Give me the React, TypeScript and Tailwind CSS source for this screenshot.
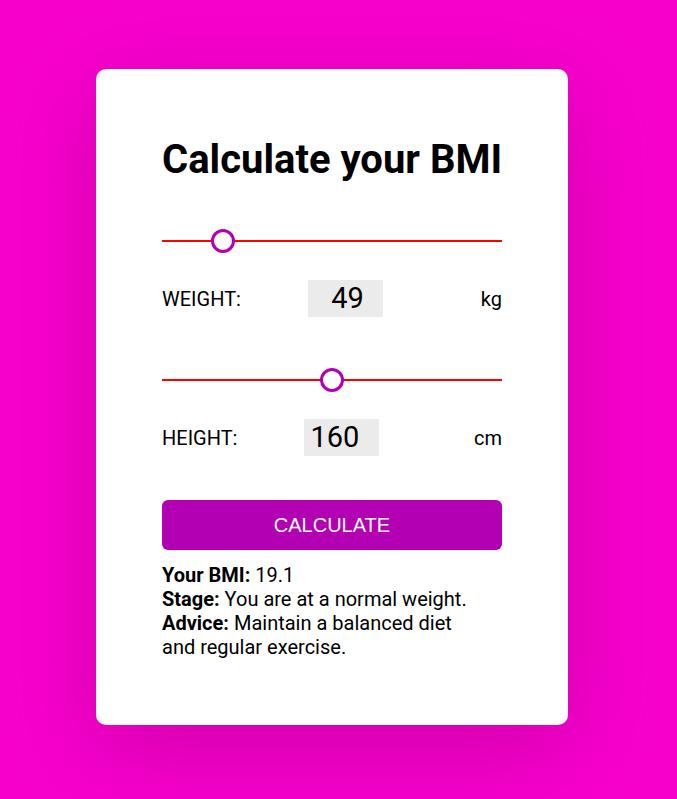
import { useState } from 'react';

function Slider({ percent }: { percent: number }) {
  return (
    <div className="relative h-6 w-full flex items-center">
      <div className="h-[2px] w-full bg-[#ff0000]" />
      <div
        className="absolute top-0 h-6 w-6 -translate-x-1/2 rounded-full border-[3px] border-[#b300b3] bg-white"
        style={{ left: `${percent}%` }}
      />
    </div>
  );
}

export default function App() {
  const [weight] = useState(49);
  const [height] = useState(160);

  return (
    <div
      className="min-h-[799px] w-full bg-[#f700cc] flex justify-center pt-[69px] pr-[13px]"
      style={{ fontFamily: 'Roboto, "Noto Sans", sans-serif' }}
    >
      <div className="w-[472px] h-[656px] rounded-[10px] bg-white px-[66px] pt-[67px] shadow-[0_24px_90px_rgba(110,0,90,0.28)]">
        <h1 className="whitespace-nowrap text-[40px] leading-[48px] font-bold text-black">
          Calculate your BMI
        </h1>

        <div className="mt-[45px]">
          <Slider percent={18} />
        </div>

        <div className="mt-[27px] flex h-[37px] items-center text-[20px] text-black">
          <span>WEIGHT:</span>
          <div className="ml-[67px] flex h-[37px] w-[75px] items-center justify-center bg-[#ebebeb] pl-[4px] text-[29px]">
            {weight}
          </div>
          <span className="ml-auto">kg</span>
        </div>

        <div className="mt-[51px]">
          <Slider percent={50} />
        </div>

        <div className="mt-[27px] flex h-[37px] items-center text-[20px] text-black">
          <span>HEIGHT:</span>
          <div className="ml-[67px] flex h-[37px] w-[75px] items-center bg-[#ebebeb] pl-[6px] text-[29px]">
            {height}
          </div>
          <span className="ml-auto">cm</span>
        </div>

        <button
          className="mt-[44px] h-[50px] w-full rounded-[6px] bg-[#b300b3] text-[20px] text-white"
          style={{ fontFamily: '"Liberation Sans", Arial, sans-serif' }}
        >
          CALCULATE
        </button>

        <div className="mt-[13px] w-[310px] text-[20px] leading-[24px] text-black">
          <p>
            <b>Your BMI:</b> 19.1
          </p>
          <p>
            <b>Stage:</b> You are at a normal weight.
          </p>
          <p>
            <b>Advice:</b> Maintain a balanced diet and regular exercise.
          </p>
        </div>
      </div>
    </div>
  );
}
